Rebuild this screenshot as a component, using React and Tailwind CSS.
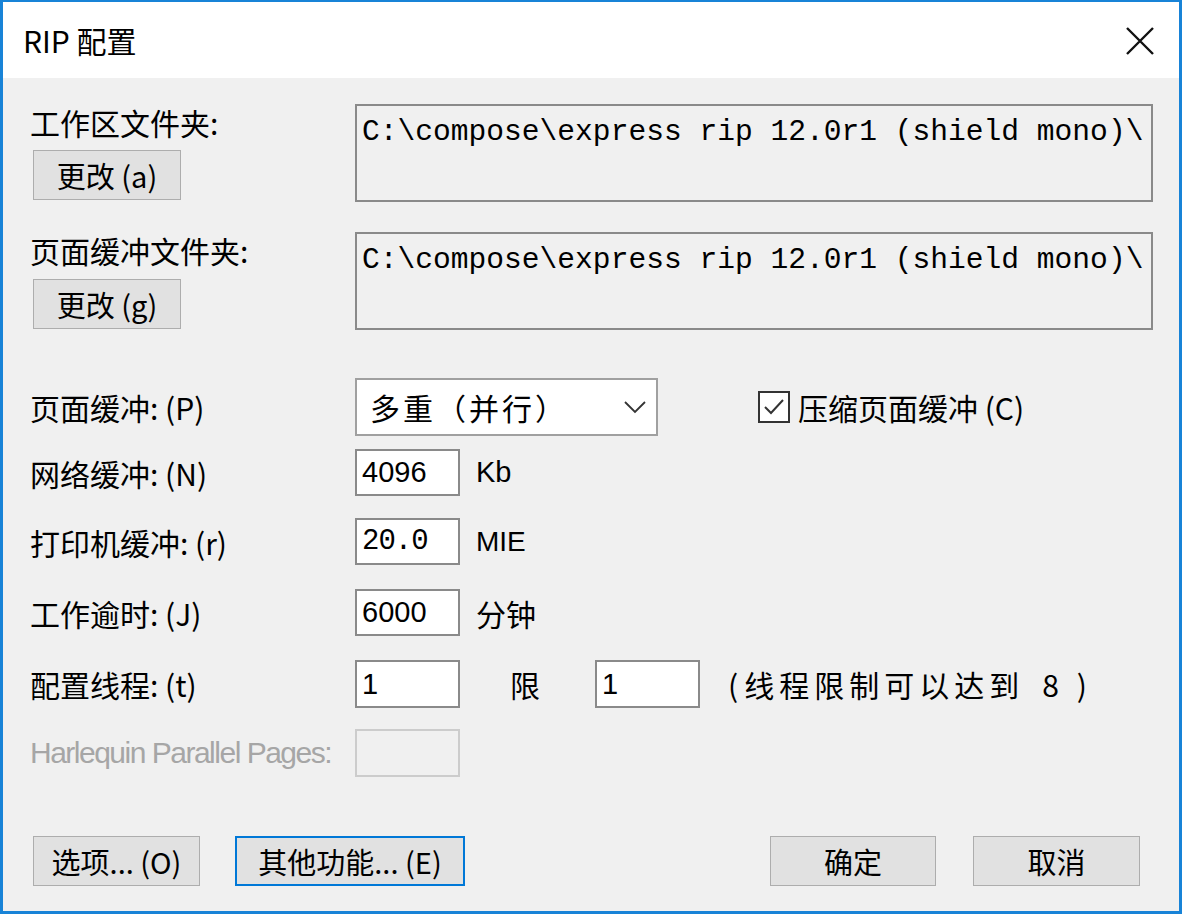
import React from 'react';

const cjk = 'font-["Noto_Sans_CJK_SC",sans-serif]';
const mono = 'font-["Liberation_Mono","Noto_Sans_CJK_SC",monospace]';

const Button = ({ children, focused, className = '' }) => (
  <div
    className={`flex h-[50px] items-center justify-center bg-[#e1e1e1] text-[29px] leading-none text-black ${cjk} ${
      focused ? 'border-2 border-[#0078d7]' : 'border border-[#adadad]'
    } ${className}`}
  >
    {children}
  </div>
);

const Field = ({ value, className = '' }) => (
  <div className={`flex h-[47px] w-[105px] items-center border-2 border-[#8a8a8a] bg-white pl-[5px] text-[29px] leading-none text-black ${className}`}>
    {value}
  </div>
);

const PathBox = ({ path }) => (
  <div className={`h-[98px] flex-1 border-2 border-[#8a8a8a] bg-[#f0f0f0] pl-[5px] pt-[9px] text-[29.6px] leading-[34px] text-black ${mono}`}>
    {path}
  </div>
);

const Row = ({ label, children, className = '' }) => (
  <div className={`flex items-center ${className}`}>
    <div className={`w-[325px] text-[30px] leading-none text-black ${cjk}`}>{label}</div>
    {children}
  </div>
);

export default function App() {
  const path = 'C:\\compose\\express rip 12.0r1 (shield mono)\\';

  return (
    <div className="flex h-[914px] w-[1182px] flex-col border-x-[3px] border-b-[3px] border-t-2 border-[#1883d7] bg-[#f0f0f0]">
      {/* title bar */}
      <div className="flex h-[76px] shrink-0 items-center justify-between bg-white pl-[20px] pr-[24px]">
        <span className={`text-[30px] leading-none text-black ${cjk}`}>RIP 配置</span>
        <svg width="30" height="30" viewBox="0 0 30 30" className="mt-[2px]">
          <path d="M2 2 L28 28 M28 2 L2 28" stroke="#111" strokeWidth="2.4" fill="none" />
        </svg>
      </div>

      <div className="flex flex-1 flex-col pl-[27px] pr-[26px]">
        {/* folders */}
        <div className="mt-[26px] flex">
          <div className="flex h-[98px] w-[325px] flex-col justify-between">
            <span className={`mt-[3px] text-[30px] leading-none text-black ${cjk}`}>工作区文件夹:</span>
            <Button className="mb-[2px] ml-[3px] h-[43px] w-[148px]">更改 (a)</Button>
          </div>
          <PathBox path={path} />
        </div>

        <div className="mt-[30px] flex">
          <div className="flex h-[98px] w-[325px] flex-col justify-between">
            <span className={`mt-[3px] text-[30px] leading-none text-black ${cjk}`}>页面缓冲文件夹:</span>
            <Button className="mb-[1px] ml-[3px] h-[43px] w-[148px]">更改 (g)</Button>
          </div>
          <PathBox path={path} />
        </div>

        {/* page buffer */}
        <Row label="页面缓冲: (P)" className="mt-[48px]">
          <div className={`flex h-[58px] w-[303px] items-center justify-between border-2 border-[#a0a0a0] bg-white pl-[13px] pr-[9px] text-[30px] leading-none tracking-[3px] text-black ${cjk}`}>
            <span>多重（并行）</span>
            <svg width="24" height="14" viewBox="0 0 24 14">
              <path d="M2 2 L12 12 L22 2" stroke="#333" strokeWidth="1.8" fill="none" />
            </svg>
          </div>
          <div className="ml-[100px] flex items-center">
            <div className="flex h-[32px] w-[32px] items-center justify-center border-2 border-[#333] bg-white">
              <svg width="24" height="20" viewBox="0 0 24 20">
                <path d="M3 10 L9 16 L21 3" stroke="#333" strokeWidth="2" fill="none" />
              </svg>
            </div>
            <span className={`ml-[8px] text-[30px] leading-none text-black ${cjk}`}>压缩页面缓冲 (C)</span>
          </div>
        </Row>

        <Row label="网络缓冲: (N)" className="mt-[13px]">
          <Field value="4096" className={`font-["Liberation_Sans",sans-serif]`} />
          <span className={`ml-[16px] text-[29px] leading-none text-black font-["Liberation_Sans",sans-serif]`}>Kb</span>
        </Row>

        <Row label="打印机缓冲: (r)" className="mt-[22px]">
          <Field value="20.0" className={`${mono} tracking-[-1px]`} />
          <span className={`ml-[16px] text-[28px] leading-none text-black font-["Liberation_Sans",sans-serif]`}>MIE</span>
        </Row>

        <Row label="工作逾时: (J)" className="mt-[24px]">
          <Field value="6000" className={`font-["Liberation_Sans",sans-serif]`} />
          <span className={`ml-[16px] text-[30px] leading-none text-black ${cjk}`}>分钟</span>
        </Row>

        <Row label="配置线程: (t)" className="mt-[24px]">
          <Field value="1" className={`h-[48px] font-["Liberation_Sans",sans-serif]`} />
          <span className={`ml-[50px] text-[30px] leading-none text-black ${cjk}`}>限</span>
          <Field value="1" className={`ml-[55px] h-[48px] font-["Liberation_Sans",sans-serif]`} />
          <span className={`ml-[28px] flex items-center text-[30px] leading-none text-black ${cjk}`}>
            <span className="mr-[6px]">(</span>
            <span className="tracking-[5px]">线程限制可以达到</span>
            <span className="ml-[18px]">8</span>
            <span className="ml-[18px]">)</span>
          </span>
        </Row>

        <div className="mt-[21px] flex items-center">
          <div className={`w-[325px] text-[30px] leading-none tracking-[-1.5px] text-[#a6a6a6] font-["Liberation_Sans",sans-serif]`}>
            Harlequin Parallel Pages:
          </div>
          <div className="h-[48px] w-[105px] border-2 border-[#cccccc] bg-[#f0f0f0]" />
        </div>

        {/* footer buttons */}
        <div className="mt-[59px] flex items-center pl-[3px] pr-[13px]">
          <Button className="w-[167px]">选项... (O)</Button>
          <Button focused className="ml-[35px] w-[230px]">其他功能... (E)</Button>
          <Button className="ml-auto w-[166px]">确定</Button>
          <Button className="ml-[37px] w-[167px]">取消</Button>
        </div>
      </div>
    </div>
  );
}
